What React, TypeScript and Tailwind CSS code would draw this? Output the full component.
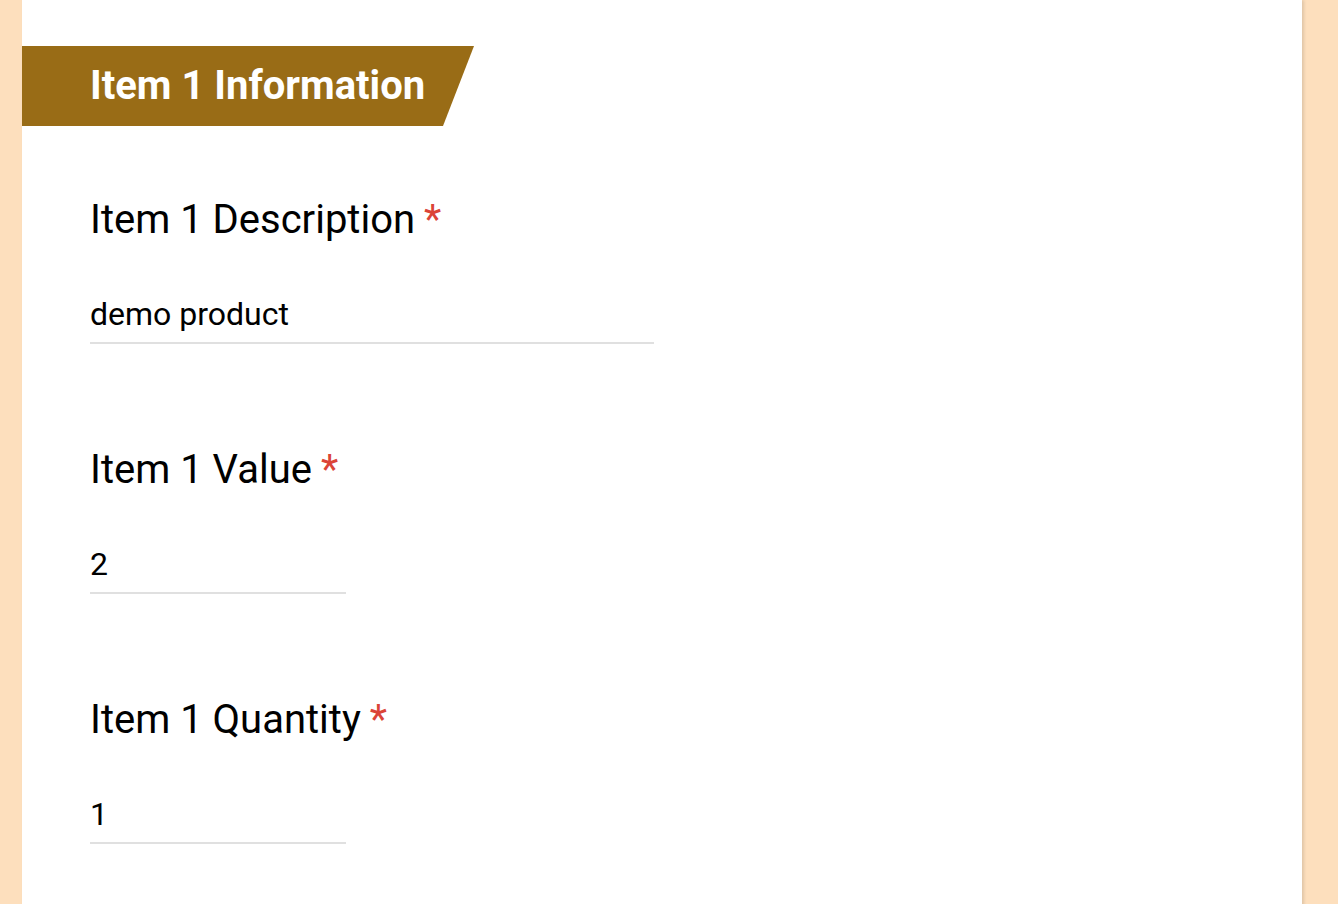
import { useState } from 'react';

type FieldProps = {
  label: string;
  value: string;
  wide?: boolean;
};

function Field({ label, value, wide }: FieldProps) {
  const [text, setText] = useState(value);
  return (
    <div className="pt-[102px] first:pt-[70px]">
      <label className="block text-[40px] leading-[48px] text-black">
        {label}
        <span className="ml-[9px] text-[#db4437]">*</span>
      </label>
      <input
        value={text}
        onChange={(e) => setText(e.target.value)}
        className={`mt-[42px] block h-[58px] border-b-2 border-[#e0e0e0] bg-transparent p-0 text-[32px] text-black outline-none ${
          wide ? 'w-[564px]' : 'w-[256px]'
        }`}
      />
    </div>
  );
}

export default function App() {
  return (
    <div className="min-h-screen bg-[#fddfbd] font-['Roboto',sans-serif]">
      <div className="ml-[22px] min-h-screen w-[1280px] bg-white pt-[46px] pb-[80px] shadow-[2px_0_3px_rgba(0,0,0,0.12)]">
        <div className="flex h-[80px] w-[452px] items-center bg-[#996c16] pl-[68px] [clip-path:polygon(0_0,100%_0,calc(100%-31px)_100%,0_100%)]">
          <h2 className="text-[40px] leading-[48px] font-bold text-white">Item 1 Information</h2>
        </div>
        <div className="pl-[68px]">
          <Field label="Item 1 Description" value="demo product" wide />
          <Field label="Item 1 Value" value="2" />
          <Field label="Item 1 Quantity" value="1" />
        </div>
      </div>
    </div>
  );
}
